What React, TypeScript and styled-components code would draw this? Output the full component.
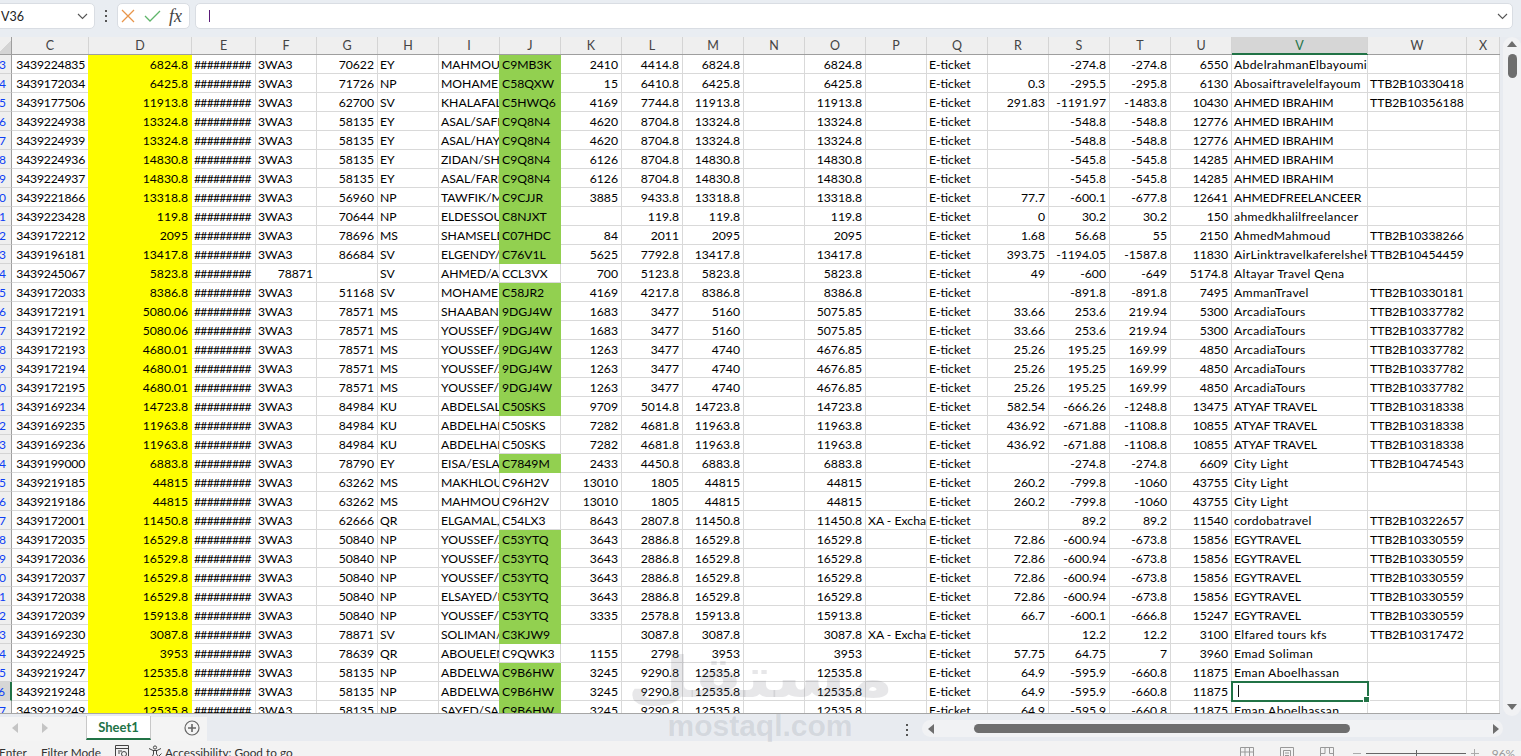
import React from "react";
import styled, { createGlobalStyle } from "styled-components";

const GlobalStyle = createGlobalStyle`
  html, body {
    margin: 0;
    padding: 0;
    overflow: hidden;
  }
  * {
    box-sizing: border-box;
  }
`;

const columns = "12px 77px 103px 64px repeat(16, 61px) 136px 99px 33px";
const letters = ["C", "D", "E", "F", "G", "H", "I", "J", "K", "L", "M", "N", "O", "P", "Q", "R", "S", "T", "U", "V", "W", "X"];

// C|D|F|G|H|I|J|K|L|M|O|P|R|S|T|U|V|W
const data = [
  "3439224835|6824.8|3WA3|70622|EY|MAHMOU|C9MB3K|2410|4414.8|6824.8|6824.8|||-274.8|-274.8|6550|AbdelrahmanElbayoumi|",
  "3439172034|6425.8|3WA3|71726|NP|MOHAME|C58QXW|15|6410.8|6425.8|6425.8||0.3|-295.5|-295.8|6130|Abosaiftravelelfayoum|TTB2B10330418",
  "3439177506|11913.8|3WA3|62700|SV|KHALAFAL|C5HWQ6|4169|7744.8|11913.8|11913.8||291.83|-1191.97|-1483.8|10430|AHMED IBRAHIM|TTB2B10356188",
  "3439224938|13324.8|3WA3|58135|EY|ASAL/SAFI.|C9Q8N4|4620|8704.8|13324.8|13324.8|||-548.8|-548.8|12776|AHMED IBRAHIM|",
  "3439224939|13324.8|3WA3|58135|EY|ASAL/HAY.|C9Q8N4|4620|8704.8|13324.8|13324.8|||-548.8|-548.8|12776|AHMED IBRAHIM|",
  "3439224936|14830.8|3WA3|58135|EY|ZIDAN/SH.|C9Q8N4|6126|8704.8|14830.8|14830.8|||-545.8|-545.8|14285|AHMED IBRAHIM|",
  "3439224937|14830.8|3WA3|58135|EY|ASAL/FARI|C9Q8N4|6126|8704.8|14830.8|14830.8|||-545.8|-545.8|14285|AHMED IBRAHIM|",
  "3439221866|13318.8|3WA3|56960|NP|TAWFIK/M|C9CJJR|3885|9433.8|13318.8|13318.8||77.7|-600.1|-677.8|12641|AHMEDFREELANCEER|",
  "3439223428|119.8|3WA3|70644|NP|ELDESSOU|C8NJXT||119.8|119.8|119.8||0|30.2|30.2|150|ahmedkhalilfreelancer|",
  "3439172212|2095|3WA3|78696|MS|SHAMSELD|C07HDC|84|2011|2095|2095||1.68|56.68|55|2150|AhmedMahmoud|TTB2B10338266",
  "3439196181|13417.8|3WA3|86684|SV|ELGENDY/|C76V1L|5625|7792.8|13417.8|13417.8||393.75|-1194.05|-1587.8|11830|AirLinktravelkaferelshekh|TTB2B10454459",
  "3439245067|5823.8|78871||SV|AHMED/A|CCL3VX|700|5123.8|5823.8|5823.8||49|-600|-649|5174.8|Altayar Travel Qena|",
  "3439172033|8386.8|3WA3|51168|SV|MOHAME|C58JR2|4169|4217.8|8386.8|8386.8|||-891.8|-891.8|7495|AmmanTravel|TTB2B10330181",
  "3439172191|5080.06|3WA3|78571|MS|SHAABAN,|9DGJ4W|1683|3477|5160|5075.85||33.66|253.6|219.94|5300|ArcadiaTours|TTB2B10337782",
  "3439172192|5080.06|3WA3|78571|MS|YOUSSEF/I|9DGJ4W|1683|3477|5160|5075.85||33.66|253.6|219.94|5300|ArcadiaTours|TTB2B10337782",
  "3439172193|4680.01|3WA3|78571|MS|YOUSSEF/A|9DGJ4W|1263|3477|4740|4676.85||25.26|195.25|169.99|4850|ArcadiaTours|TTB2B10337782",
  "3439172194|4680.01|3WA3|78571|MS|YOUSSEF/A|9DGJ4W|1263|3477|4740|4676.85||25.26|195.25|169.99|4850|ArcadiaTours|TTB2B10337782",
  "3439172195|4680.01|3WA3|78571|MS|YOUSSEF/H|9DGJ4W|1263|3477|4740|4676.85||25.26|195.25|169.99|4850|ArcadiaTours|TTB2B10337782",
  "3439169234|14723.8|3WA3|84984|KU|ABDELSAL|C50SKS|9709|5014.8|14723.8|14723.8||582.54|-666.26|-1248.8|13475|ATYAF TRAVEL|TTB2B10318338",
  "3439169235|11963.8|3WA3|84984|KU|ABDELHAI|C50SKS|7282|4681.8|11963.8|11963.8||436.92|-671.88|-1108.8|10855|ATYAF TRAVEL|TTB2B10318338",
  "3439169236|11963.8|3WA3|84984|KU|ABDELHAI|C50SKS|7282|4681.8|11963.8|11963.8||436.92|-671.88|-1108.8|10855|ATYAF TRAVEL|TTB2B10318338",
  "3439199000|6883.8|3WA3|78790|EY|EISA/ESLA|C7849M|2433|4450.8|6883.8|6883.8|||-274.8|-274.8|6609|City Light|TTB2B10474543",
  "3439219185|44815|3WA3|63262|MS|MAKHLOU|C96H2V|13010|1805|44815|44815||260.2|-799.8|-1060|43755|City Light|",
  "3439219186|44815|3WA3|63262|MS|MAHMOU|C96H2V|13010|1805|44815|44815||260.2|-799.8|-1060|43755|City Light|",
  "3439172001|11450.8|3WA3|62666|QR|ELGAMAL,|C54LX3|8643|2807.8|11450.8|11450.8|XA - Exchange||89.2|89.2|11540|cordobatravel|TTB2B10322657",
  "3439172035|16529.8|3WA3|50840|NP|YOUSSEF/A|C53YTQ|3643|2886.8|16529.8|16529.8||72.86|-600.94|-673.8|15856|EGYTRAVEL|TTB2B10330559",
  "3439172036|16529.8|3WA3|50840|NP|YOUSSEF/A|C53YTQ|3643|2886.8|16529.8|16529.8||72.86|-600.94|-673.8|15856|EGYTRAVEL|TTB2B10330559",
  "3439172037|16529.8|3WA3|50840|NP|YOUSSEF/S|C53YTQ|3643|2886.8|16529.8|16529.8||72.86|-600.94|-673.8|15856|EGYTRAVEL|TTB2B10330559",
  "3439172038|16529.8|3WA3|50840|NP|ELSAYED/N|C53YTQ|3643|2886.8|16529.8|16529.8||72.86|-600.94|-673.8|15856|EGYTRAVEL|TTB2B10330559",
  "3439172039|15913.8|3WA3|50840|NP|YOUSSEF/I|C53YTQ|3335|2578.8|15913.8|15913.8||66.7|-600.1|-666.8|15247|EGYTRAVEL|TTB2B10330559",
  "3439169230|3087.8|3WA3|78871|SV|SOLIMAN/|C3KJW9||3087.8|3087.8|3087.8|XA - Exchange||12.2|12.2|3100|Elfared tours kfs|TTB2B10317472",
  "3439224925|3953|3WA3|78639|QR|ABOUELEN|C9QWK3|1155|2798|3953|3953||57.75|64.75|7|3960|Emad Soliman|",
  "3439219247|12535.8|3WA3|58135|NP|ABDELWA|C9B6HW|3245|9290.8|12535.8|12535.8||64.9|-595.9|-660.8|11875|Eman Aboelhassan|",
  "3439219248|12535.8|3WA3|58135|NP|ABDELWA|C9B6HW|3245|9290.8|12535.8|12535.8||64.9|-595.9|-660.8|11875||",
  "3439219249|12535.8|3WA3|58135|NP|SAYED/SA|C9B6HW|3245|9290.8|12535.8|12535.8||64.9|-595.9|-660.8|11875|Eman Aboelhassan|",
];

const noGreen = [14, 22, 23, 25, 26, 27, 34];
const activeRow = 36;

const isNumber = (v: string) => /^-?[\d.]+$/.test(v);

// letter-spacing evens out the difference between Lato and the sheet's font
const spacingFor = (val: string, idx: number) => {
  if (idx === 2) return "-0.75px";
  if (idx === 0) return "-0.2px";
  if (idx === 19 && /[a-z]/.test(val)) return "0.33px";
  return "normal";
};

const Chevron = () => (
  <svg width="11" height="7" viewBox="0 0 11 7" fill="none" stroke="#555" strokeWidth="1.1">
    <path d="M1 1l4.5 4.5L10 1" />
  </svg>
);

const Kebab = () => (
  <KebabBox>
    <i />
    <i />
    <i />
  </KebabBox>
);

const App = () => {
  return (
    <Page>
      <GlobalStyle />
      <FormulaBar>
        <NameBox>
          <span>V36</span>
          <Chevron />
        </NameBox>
        <Kebab />
        <FormulaButtons>
          <svg width="16" height="16" viewBox="0 0 16 16" fill="none" stroke="#e8954a" strokeWidth="1.3">
            <path d="M2 2l12 12M14 2L2 14" />
          </svg>
          <svg width="17" height="14" viewBox="0 0 17 14" fill="none" stroke="#5fb56a" strokeWidth="1.3">
            <path d="M1 7l5 5L16 2" />
          </svg>
          <Fx>fx</Fx>
        </FormulaButtons>
        <FormulaInput>
          <Caret />
          <Chevron />
        </FormulaInput>
      </FormulaBar>

      <SheetArea>
        <Grid>
          <HeaderRow>
            <Corner />
            {letters.map((l) => (
              <ColHead key={l} $active={l === "V"}>
                {l}
              </ColHead>
            ))}
          </HeaderRow>
          <Rows>
            {data.map((line, i) => {
              const rowNo = i + 3;
              const [c, d, f, g, h, name, j, k, l, m, o, p, r, s, t, u, v, w] = line.split("|");
              const values = [c, d, "#########", f, g, h, name, j, k, l, m, "", o, p, "E-ticket", r, s, t, u, v, w, ""];
              return (
                <Row key={rowNo}>
                  <RowHead $active={rowNo === activeRow}>{rowNo}</RowHead>
                  {values.map((val, idx) => {
                    const active = rowNo === activeRow && idx === 19;
                    const fill = idx === 1 ? "#ffff00" : idx === 7 && !noGreen.includes(rowNo) ? "#92d050" : undefined;
                    return (
                      <Cell key={idx} $right={isNumber(val)} $fill={fill} $active={active} $spacing={spacingFor(val, idx)}>
                        {active ? <CellCaret /> : val}
                      </Cell>
                    );
                  })}
                </Row>
              );
            })}
          </Rows>
        </Grid>
        <VScroll>
          <UpArrow />
          <VThumb />
          <DownArrow />
        </VScroll>
      </SheetArea>

      <TabBar>
        <TabNav>
          <NavArrows>
            <LeftArrow $color="#c4c4c4" />
            <RightArrow $color="#c4c4c4" />
          </NavArrows>
          <SheetTab>Sheet1</SheetTab>
          <AddSheet>
            <svg width="16" height="16" viewBox="0 0 16 16" fill="none" stroke="#666" strokeWidth="1.2">
              <circle cx="8" cy="8" r="7" />
              <path d="M8 4v8M4 8h8" strokeWidth="1.6" />
            </svg>
          </AddSheet>
        </TabNav>
        <TabSpacer />
        <Kebab />
        <HScroll>
          <LeftArrow $color="#6e6e6e" />
          <HTrack>
            <HThumb />
          </HTrack>
          <RightArrow $color="#6e6e6e" />
        </HScroll>
      </TabBar>

      <StatusBar>
        <StatusLeft>
          <span>Enter</span>
          <span>Filter Mode</span>
          <svg width="14" height="14" viewBox="0 0 14 14" fill="none" stroke="#444" strokeWidth="1">
            <path d="M.5 13V.5h13V13M.5 3.5h13M3 6h4M3 8h2" />
            <circle cx="9" cy="9" r="2.5" />
          </svg>
          <A11y>
            <svg width="15" height="15" viewBox="0 0 15 15" fill="none" stroke="#444" strokeWidth="1">
              <circle cx="7" cy="2.5" r="1.6" />
              <path d="M1 3.5l4 2h4l4-2M5.5 5.5V9l-2 4M8.5 5.5V9l2 2.5 3-3" />
            </svg>
            <span>Accessibility: Good to go</span>
          </A11y>
        </StatusLeft>
        <StatusRight>
          <ViewIcons>
            <svg width="14" height="14" viewBox="0 0 14 14" fill="none" stroke="#999">
              <path d="M.5.5h13v13H.5zM.5 5h13M.5 9.5h13M5 .5v13M9.5.5v13" />
            </svg>
            <svg width="14" height="14" viewBox="0 0 14 14" fill="none" stroke="#999">
              <path d="M.5.5h13v13H.5zM3.5 3.5h7v9h-7zM5 6h4M5 8.5h4" />
            </svg>
            <svg width="14" height="14" viewBox="0 0 14 14" fill="none" stroke="#999">
              <path d="M.5.5h13v13M.5.5v13M5 .5v6M9.5.5v6M.5 6.5H5M9.5 6.5h4" />
            </svg>
          </ViewIcons>
          <Zoomer>
            <ZoomSign />
            <ZoomLine>
              <ZoomTick />
            </ZoomLine>
            <ZoomSign $plus />
          </Zoomer>
          <ZoomValue>96%</ZoomValue>
        </StatusRight>
      </StatusBar>

      <Watermark>
        <WatermarkArabic>مستقل</WatermarkArabic>
        <WatermarkLatin>mostaql.com</WatermarkLatin>
      </Watermark>
    </Page>
  );
};

export default App;

const Page = styled.div`
  position: relative;
  width: 1521px;
  height: 756px;
  overflow: hidden;
  display: flex;
  flex-direction: column;
  background-color: #e8ebf0;
  font-family: Lato, "Liberation Sans", sans-serif;
  color: #000;
`;

const FormulaBar = styled.div`
  height: 37px;
  flex: none;
  display: flex;
  align-items: flex-start;
  padding: 3px 8px 0 0;
  background-color: #e9edf2;
`;

const NameBox = styled.div`
  width: 96px;
  height: 26px;
  margin-left: -1px;
  display: flex;
  align-items: center;
  justify-content: space-between;
  padding: 0 6px 0 1px;
  background-color: #fff;
  border: 1px solid #d9dde3;
  border-radius: 0 5px 5px 0;
  font-size: 12.5px;
  color: #222;
`;

const KebabBox = styled.div`
  width: 22px;
  height: 26px;
  flex: none;
  display: flex;
  flex-direction: column;
  align-items: center;
  justify-content: center;
  gap: 3px;

  i {
    width: 2px;
    height: 2px;
    background-color: #555;
  }
`;

const FormulaButtons = styled.div`
  width: 73px;
  height: 26px;
  display: flex;
  align-items: center;
  gap: 8px;
  padding-left: 2px;
  background-color: #fff;
  border: 1px solid #d9dde3;
  border-radius: 5px;
`;

const Fx = styled.span`
  font-family: "Liberation Serif", serif;
  font-style: italic;
  font-size: 18px;
  color: #444;
`;

const FormulaInput = styled.div`
  flex: 1;
  height: 26px;
  margin-left: 5px;
  display: flex;
  align-items: center;
  justify-content: space-between;
  padding: 0 4px 0 13px;
  background-color: #fff;
  border: 1px solid #d9dde3;
  border-radius: 5px;
`;

const Caret = styled.div`
  width: 1px;
  height: 12px;
  background-color: #5a1a78;
`;

const SheetArea = styled.div`
  height: 680px;
  flex: none;
  display: flex;
  align-items: flex-start;
`;

const Grid = styled.div`
  width: 1500px;
  height: 677px;
  display: flex;
  flex-direction: column;
  background-color: #fff;
  border-bottom: 1px solid #a6a6a6;
`;

const HeaderRow = styled.div`
  height: 18px;
  flex: none;
  display: grid;
  grid-template-columns: ${columns};
  background-color: #efefef;
  border-bottom: 1px solid #9e9e9e;
`;

const Corner = styled.div`
  border-right: 1px solid #9e9e9e;
  background: linear-gradient(135deg, transparent 50%, #d4d4d4 50%);
`;

const ColHead = styled.div<{ $active?: boolean }>`
  font-size: 12.5px;
  line-height: 17px;
  text-align: center;
  overflow: hidden;
  color: ${(p) => (p.$active ? "#217346" : "#444")};
  background-color: ${(p) => (p.$active ? "#d6d6d6" : "transparent")};
  border-right: 1px solid #d4d4d4;
  box-shadow: ${(p) => (p.$active ? "0 1px 0 #217346, inset 0 -1px 0 #217346" : "none")};
`;

const Rows = styled.div`
  flex: 1;
  min-height: 0;
  overflow: hidden;
`;

const Row = styled.div`
  height: 19px;
  display: grid;
  grid-template-columns: ${columns};
`;

const RowHead = styled.div<{ $active?: boolean }>`
  height: 19px;
  padding-right: 5px;
  display: flex;
  justify-content: flex-end;
  overflow: hidden;
  font-size: 12px;
  line-height: 19px;
  color: #0b3df5;
  background-color: ${(p) => (p.$active ? "#d6d6d6" : "#efefef")};
  border-right: ${(p) => (p.$active ? "2px solid #217346" : "1px solid #9e9e9e")};
  border-bottom: 1px solid #d4d4d4;
`;

const Cell = styled.div<{ $right?: boolean; $fill?: string; $active?: boolean; $spacing?: string }>`
  position: relative;
  height: 19px;
  padding: 0 ${(p) => (p.$right ? "3px" : "0")} 0 ${(p) => (p.$fill ? "3px" : "2px")};
  overflow: ${(p) => (p.$active ? "visible" : "hidden")};
  white-space: nowrap;
  font-size: 12.2px;
  line-height: 19px;
  letter-spacing: ${(p) => p.$spacing || "normal"};
  text-align: ${(p) => (p.$right ? "right" : "left")};
  background-color: ${(p) => p.$fill || "transparent"};
  border-right: 1px solid ${(p) => (p.$fill ? "transparent" : "#d9d9d9")};
  border-bottom: 1px solid ${(p) => (p.$fill ? "transparent" : "#d9d9d9")};
  margin-left: ${(p) => (p.$fill ? "-1px" : "0")};

  ${(p) =>
    p.$active &&
    `
    outline: 2px solid #217346;
    outline-offset: -1px;
    z-index: 2;
    background-color: #fff;
    &::after {
      content: "";
      position: absolute;
      right: -3px;
      bottom: -3px;
      width: 5px;
      height: 5px;
      background-color: #217346;
      border: 1px solid #fff;
    }
  `}
`;

const CellCaret = styled.div`
  width: 1px;
  height: 12px;
  margin: 3px 0 0 4px;
  background-color: #111;
`;

const VScroll = styled.div`
  width: 18px;
  height: 679px;
  margin-left: 3px;
  display: flex;
  flex-direction: column;
  align-items: center;
  padding-top: 4px;
  background-color: #f1f2f4;
  border-radius: 9px;
`;

const UpArrow = styled.div`
  width: 0;
  height: 0;
  border-left: 5px solid transparent;
  border-right: 5px solid transparent;
  border-bottom: 6px solid #6e6e6e;
`;

const DownArrow = styled.div`
  width: 0;
  height: 0;
  margin-top: auto;
  margin-bottom: 6px;
  border-left: 5px solid transparent;
  border-right: 5px solid transparent;
  border-top: 6px solid #6e6e6e;
`;

const VThumb = styled.div`
  width: 9px;
  height: 24px;
  margin-top: 7px;
  border-radius: 5px;
  background-color: #6e6e6e;
`;

const TabBar = styled.div`
  height: 24px;
  flex: none;
  display: flex;
  align-items: flex-start;
`;

const TabNav = styled.div`
  width: 207px;
  height: 24px;
  display: flex;
  background-color: #f4f4f4;
`;

const TabSpacer = styled.div`
  flex: 1;
`;

const NavArrows = styled.div`
  width: 86px;
  height: 22px;
  display: flex;
  align-items: center;
  gap: 24px;
  padding-left: 12px;
`;

const LeftArrow = styled.div<{ $color: string }>`
  width: 0;
  height: 0;
  flex: none;
  border-top: 5px solid transparent;
  border-bottom: 5px solid transparent;
  border-right: 6px solid ${(p) => p.$color};
`;

const RightArrow = styled.div<{ $color: string }>`
  width: 0;
  height: 0;
  flex: none;
  border-top: 5px solid transparent;
  border-bottom: 5px solid transparent;
  border-left: 6px solid ${(p) => p.$color};
`;

const SheetTab = styled.div`
  width: 65px;
  height: 24px;
  margin-top: -1px;
  text-align: center;
  font-size: 13px;
  line-height: 22px;
  font-weight: 700;
  color: #217346;
  background-color: #fff;
  border-left: 1px solid #c8c8c8;
  border-right: 1px solid #c8c8c8;
  border-bottom: 2px solid #217346;
`;

const AddSheet = styled.div`
  height: 22px;
  padding-left: 33px;
  display: flex;
  align-items: center;
`;

const HScroll = styled.div`
  width: 581px;
  height: 17px;
  margin: 3px 18px 0 4px;
  display: flex;
  align-items: center;
  gap: 7px;
  padding: 0 4px 0 6px;
  background-color: #f1f2f4;
  border-radius: 9px;
`;

const HTrack = styled.div`
  flex: 1;
  height: 9px;
  padding-left: 33px;
`;

const HThumb = styled.div`
  width: 376px;
  height: 9px;
  border-radius: 5px;
  background-color: #6e6e6e;
`;

const StatusBar = styled.div`
  flex: 1;
  min-height: 0;
  display: flex;
  justify-content: space-between;
  overflow: hidden;
  background-color: #f3f3f3;
  font-size: 11.8px;
  color: #333;
`;

const StatusLeft = styled.div`
  height: 20px;
  display: flex;
  align-items: center;
  gap: 14px;
  margin-left: -1px;
  margin-top: 1px;
`;

const A11y = styled.div`
  display: flex;
  align-items: center;
  gap: 2px;
  margin-left: 5px;
`;

const StatusRight = styled.div`
  height: 15px;
  display: flex;
  align-items: center;
  padding: 2px 6px 0 0;
  color: #999;
`;

const ViewIcons = styled.div`
  display: flex;
  gap: 26px;
  margin-top: 8px;
`;

const Zoomer = styled.div`
  display: flex;
  align-items: center;
  gap: 5px;
  margin-left: 19px;
  margin-top: 8px;
`;

const ZoomSign = styled.div<{ $plus?: boolean }>`
  position: relative;
  width: 8px;
  height: 1px;
  background-color: #aaa;

  &::after {
    content: "";
    display: ${(p) => (p.$plus ? "block" : "none")};
    position: absolute;
    left: 3px;
    top: -4px;
    width: 1px;
    height: 9px;
    background-color: #aaa;
  }
`;

const ZoomLine = styled.div`
  position: relative;
  width: 100px;
  height: 1px;
  background-color: #666;
`;

const ZoomTick = styled.div`
  position: absolute;
  left: 50px;
  top: -3px;
  width: 1px;
  height: 7px;
  background-color: #666;
`;

const ZoomValue = styled.span`
  margin: 8px 0 0 13px;
`;

const Watermark = styled.div`
  position: absolute;
  left: 660px;
  top: 648px;
  width: 200px;
  display: flex;
  flex-direction: column;
  align-items: center;
  pointer-events: none;
  color: rgba(110, 115, 125, 0.17);
`;

const WatermarkArabic = styled.div`
  font-family: "DejaVu Sans", sans-serif;
  font-weight: 700;
  font-size: 56px;
  line-height: 60px;
  transform: scaleX(1.3);
`;

const WatermarkLatin = styled.div`
  font-family: "Liberation Sans", sans-serif;
  font-weight: 700;
  font-size: 30px;
  line-height: 36px;
`;
